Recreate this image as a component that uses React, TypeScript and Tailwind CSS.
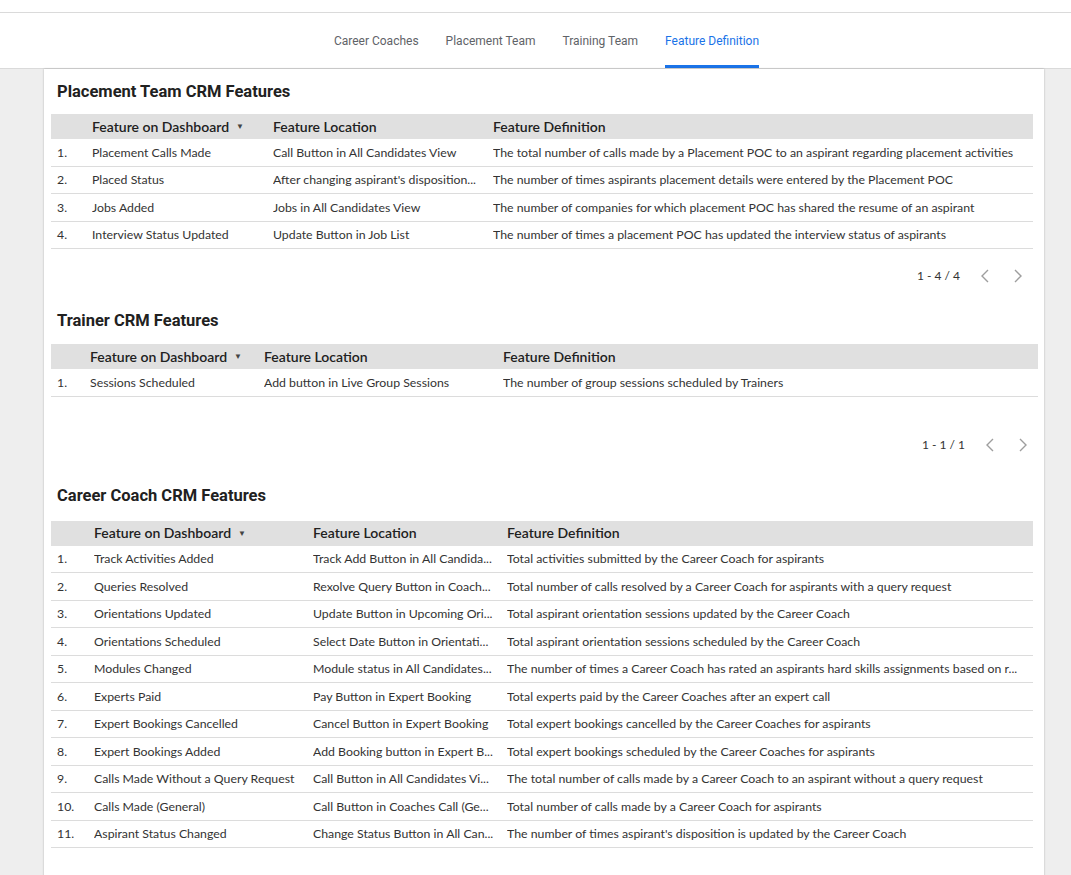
import React from "react";

type Row = [string, string, string];

const placementRows: Row[] = [
  ["Placement Calls Made", "Call Button in All Candidates View", "The total number of calls made by a Placement POC to an aspirant regarding placement activities"],
  ["Placed Status", "After changing aspirant's disposition...", "The number of times aspirants placement details were entered by the Placement POC"],
  ["Jobs Added", "Jobs in All Candidates View", "The number of companies for which placement POC has shared the resume of an aspirant"],
  ["Interview Status Updated", "Update Button in Job List", "The number of times a placement POC has updated the interview status of aspirants"],
];

const trainerRows: Row[] = [
  ["Sessions Scheduled", "Add button in Live Group Sessions", "The number of group sessions scheduled by Trainers"],
];

const coachRows: Row[] = [
  ["Track Activities Added", "Track Add Button in All Candida...", "Total activities submitted by the Career Coach for aspirants"],
  ["Queries Resolved", "Rexolve Query Button in Coach...", "Total number of calls resolved by a Career Coach for aspirants with a query request"],
  ["Orientations Updated", "Update Button in Upcoming Ori...", "Total aspirant orientation sessions updated by the Career Coach"],
  ["Orientations Scheduled", "Select Date Button in Orientati...", "Total aspirant orientation sessions scheduled by the Career Coach"],
  ["Modules Changed", "Module status in All Candidates...", "The number of times a Career Coach has rated an aspirants hard skills assignments based on r..."],
  ["Experts Paid", "Pay Button in Expert Booking", "Total experts paid by the Career Coaches after an expert call"],
  ["Expert Bookings Cancelled", "Cancel Button in Expert Booking", "Total expert bookings cancelled by the Career Coaches for aspirants"],
  ["Expert Bookings Added", "Add Booking button in Expert B...", "Total expert bookings scheduled by the Career Coaches for aspirants"],
  ["Calls Made Without a Query Request", "Call Button in All Candidates Vi...", "The total number of calls made by a Career Coach to an aspirant without a query request"],
  ["Calls Made (General)", "Call Button in Coaches Call (Ge...", "Total number of calls made by a Career Coach for aspirants"],
  ["Aspirant Status Changed", "Change Status Button in All Can...", "The number of times aspirant's disposition is updated by the Career Coach"],
];

const bodyFont = { fontFamily: "Lato, 'Open Sans', sans-serif" };

const Chevron = ({ dir }: { dir: "left" | "right" }) => (
  <svg width="10" height="16" viewBox="0 0 10 16" fill="none">
    <polyline
      points={dir === "left" ? "8,2 2,8 8,14" : "2,2 8,8 2,14"}
      stroke="#9e9e9e"
      strokeWidth="1.4"
    />
  </svg>
);

const FeatureTable = ({ rows, cols }: { rows: Row[]; cols: string }) => (
  <div style={bodyFont} className="text-[#333333]">
    <div className={`grid ${cols} h-[25px] items-center bg-[#e0e0e0] pb-[1px] text-[14px] font-semibold text-[#212121]`}>
      <div />
      <div className="flex items-center">
        Feature on Dashboard
        <span className="ml-[7px] text-[8px] text-[#444]">▼</span>
      </div>
      <div>Feature Location</div>
      <div>Feature Definition</div>
    </div>
    {rows.map((r, i) => (
      <div
        key={i}
        className={`grid ${cols} h-[27.5px] items-center border-b border-[#dcdcdc] pt-[1px] text-[12.3px]`}
      >
        <div className="pl-[6px]">{i + 1}.</div>
        <div className="truncate pr-2">{r[0]}</div>
        <div className="truncate pr-2">{r[1]}</div>
        <div className="truncate pr-1">{r[2]}</div>
      </div>
    ))}
  </div>
);

const Pager = ({ label }: { label: string }) => (
  <div style={bodyFont} className="flex h-[24px] items-center justify-end gap-[20px] pr-[10px] text-[12px] text-[#333]">
    <span>{label}</span>
    <div className="flex items-center gap-[23px]">
      <Chevron dir="left" />
      <Chevron dir="right" />
    </div>
  </div>
);

const tabs = ["Career Coaches", "Placement Team", "Training Team", "Feature Definition"];

export default function App() {
  return (
    <div className="flex min-h-screen flex-col bg-[#eeeeee]" style={{ fontFamily: "Roboto, sans-serif" }}>
      <div className="h-[13px] border-b border-[#dadada] bg-white" />
      <div className="flex h-[56px] items-end justify-center gap-[27px] border-b border-[#dadada] bg-white pl-[22px]">
        {tabs.map((t) => {
          const active = t === "Feature Definition";
          return (
            <div
              key={t}
              className={`flex h-full flex-col justify-center border-b-[3px] pt-[3px] text-[12px] ${
                active ? "border-[#1a73e8] text-[#1a73e8]" : "border-transparent text-[#5f6368]"
              }`}
            >
              {t}
            </div>
          );
        })}
      </div>

      <div className="ml-[44px] mr-[27px] flex-1 bg-white pb-[40px] pl-[7px] pr-[11px] shadow-[0_0_2px_rgba(0,0,0,0.25)]">
        <h2 className="mt-[13px] pl-[6px] text-[16.5px] leading-[20px] font-bold text-[#212121]">
          Placement Team CRM Features
        </h2>
        <div className="mt-[12px]">
          <FeatureTable rows={placementRows} cols="grid-cols-[41px_181px_220px_1fr]" />
        </div>
        <div className="mt-[15px]">
          <Pager label="1 - 4 / 4" />
        </div>

        <h2 className="mt-[23px] pl-[6px] text-[16.5px] leading-[20px] font-bold text-[#212121]">
          Trainer CRM Features
        </h2>
        <div className="mt-[13px] mr-[-5px]">
          <FeatureTable rows={trainerRows} cols="grid-cols-[39px_174px_239px_1fr]" />
        </div>
        <div className="mt-[36px] mr-[-5px]">
          <Pager label="1 - 1 / 1" />
        </div>

        <h2 className="mt-[29px] pl-[6px] text-[16.5px] leading-[20px] font-bold text-[#212121]">
          Career Coach CRM Features
        </h2>
        <div className="mt-[15px]">
          <FeatureTable rows={coachRows} cols="grid-cols-[43px_219px_194px_1fr]" />
        </div>
      </div>
    </div>
  );
}
